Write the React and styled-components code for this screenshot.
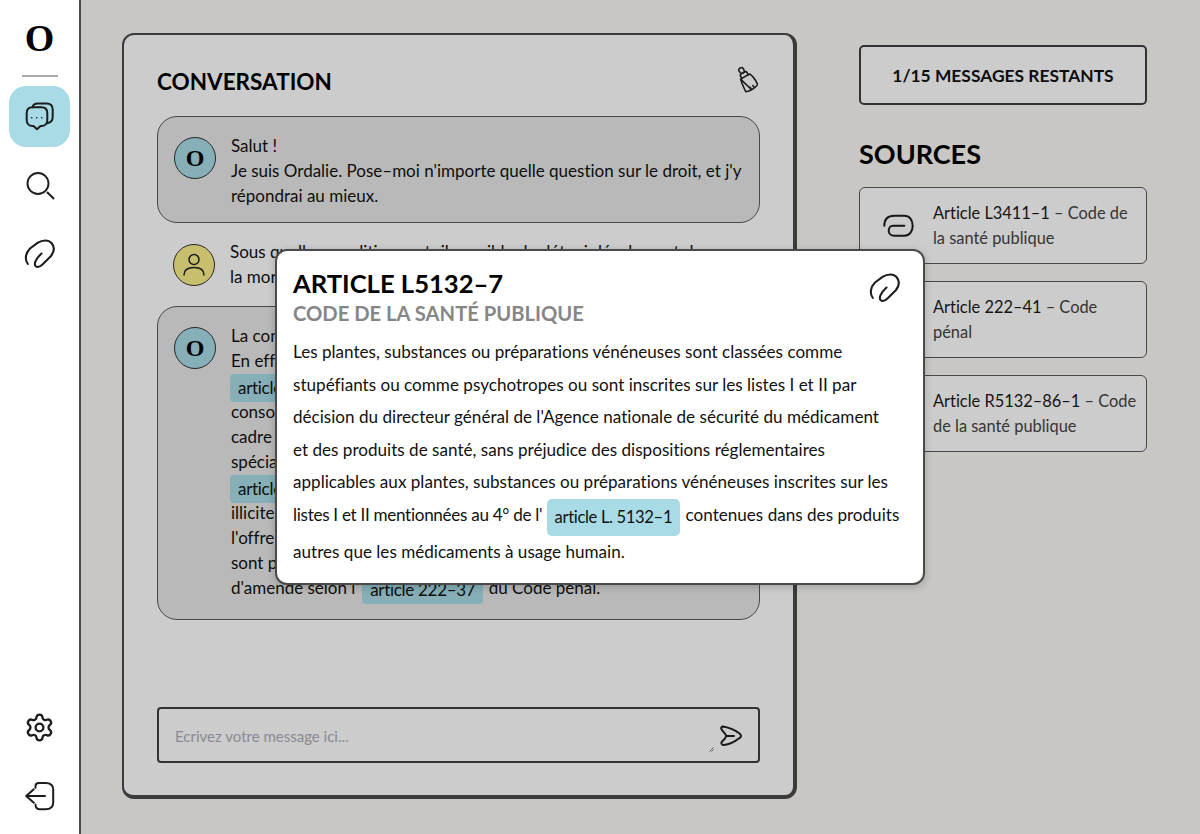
import React from "react";
import styled, { createGlobalStyle } from "styled-components";
import { Settings } from "lucide-react";

const Global = createGlobalStyle`
  html, body { margin: 0; padding: 0; }
  body {
    font-family: "Lato", "Liberation Sans", sans-serif;
    font-variant-ligatures: none;
    color: #111;
    background: #faf9f4;
  }
  * { box-sizing: border-box; }
`;

const Page = styled.div`
  display: flex;
  width: 1200px;
  height: 834px;
  overflow: hidden;
`;

const Sidebar = styled.aside`
  width: 81px;
  flex: none;
  background: #fff;
  border-right: 2px solid #4a4a4a;
  display: flex;
  flex-direction: column;
  align-items: center;
  padding: 18px 0 8px;
`;

const Logo = styled.div`
  font-family: "Liberation Serif", serif;
  font-weight: 700;
  font-size: 38px;
  line-height: 40px;
  color: #000;
`;

const Divider = styled.hr`
  width: 36px;
  height: 2px;
  border: 0;
  margin: 17px 0 9px;
  background: #aaa;
  flex: none;
`;

const NavItem = styled.div`
  width: 61px;
  height: 61px;
  flex: none;
  margin-bottom: ${(p) => p.$gap ?? 8}px;
  display: flex;
  align-items: center;
  justify-content: center;
  border-radius: 17px;
  color: #1d1d1d;
  background: ${(p) => (p.$active ? "#a8dbe6" : "transparent")};
`;

const Spacer = styled.div`
  flex: 1;
`;

const Main = styled.main`
  position: relative;
  flex: 1;
  display: flex;
  align-items: flex-start;
  gap: 62px;
  padding: 33px 53px 35px 41px;
`;

const Dim = styled.div`
  position: absolute;
  inset: 0;
  background: rgba(0, 0, 0, 0.2);
`;

const ChatCard = styled.section`
  width: 675px;
  height: 766px;
  flex: none;
  display: flex;
  flex-direction: column;
  background: #fff;
  border: solid #4a4a4a;
  border-width: 2px 4px 4px 2px;
  border-radius: 12px;
  padding: 0 33px 32px;
`;

const ChatHeader = styled.header`
  height: 81px;
  flex: none;
  display: flex;
  align-items: center;
  justify-content: space-between;
  padding: 11px 0 0;
`;

const ChatTitle = styled.h2`
  margin: 0;
  font-size: 22.5px;
  font-weight: 700;
  color: #000;
`;

const CleanButton = styled.div`
  display: flex;
  margin: -3px 2px 0 0;
  color: #222;
`;

const Messages = styled.div`
  flex: 1;
  display: flex;
  flex-direction: column;
  gap: 10px;
`;

const Message = styled.div`
  display: flex;
  gap: 15px;
  padding: ${(p) => (p.$bot ? `16px 17px ${p.$bottom ?? 14}px 16px` : "5px 17px 6px 15px")};
  border-radius: 20px;
  border: 1px solid ${(p) => (p.$bot ? "#5a5a5a" : "transparent")};
  background: ${(p) => (p.$bot ? "#e8e8e8" : "transparent")};
  font-size: 17px;
  line-height: 25px;
`;

const Avatar = styled.div`
  width: 42px;
  height: 42px;
  flex: none;
  margin-top: ${(p) => p.$top}px;
  border-radius: 50%;
  border: 1px solid #333;
  background: ${(p) => p.$color};
  display: flex;
  align-items: center;
  justify-content: center;
  font-family: "Liberation Serif", serif;
  font-weight: 700;
  font-size: 24px;
  color: #000;
`;

const MessageText = styled.div`
  flex: 1;
  white-space: nowrap;
`;

const Chip = styled.span`
  display: inline-block;
  font-size: 17px;
  letter-spacing: -0.3px;
  line-height: 25px;
  padding: 1px 8px 2px;
  margin: 0 1px -3px -1px;
  border-radius: 4px;
  background: #a8dbe6;
  vertical-align: -2px;
`;

const InputBox = styled.div`
  position: relative;
  height: 56px;
  flex: none;
  display: flex;
  align-items: center;
  border: 2px solid #3f3f3f;
  border-radius: 4px;
  padding: 0 16px 0 0;
`;

const InputField = styled.textarea`
  flex: 1;
  height: 44px;
  padding: 13px 0 0 16px;
  border: 0;
  outline: none;
  background: transparent;
  resize: none;
  font-family: inherit;
  font-size: 15px;
  line-height: 20px;
  &::placeholder { color: #adadba; opacity: 1; }
`;

const ResizeGrip = styled.svg`
  position: absolute;
  right: 44px;
  bottom: 9px;
  color: #555;
`;

const SendButton = styled.div`
  display: flex;
  flex: none;
  margin-top: 1px;
  color: #1f1f1f;
`;

const Side = styled.aside`
  width: 288px;
  flex: none;
  padding-top: 12px;
`;

const Counter = styled.div`
  height: 60px;
  display: flex;
  align-items: center;
  justify-content: center;
  border: 2px solid #3f3f3f;
  border-radius: 5px;
  background: #fff;
  font-size: 17.4px;
  font-weight: 700;
  color: #111;
`;

const SourcesTitle = styled.h2`
  margin: 32px 0 16px;
  font-size: 27px;
  line-height: 34px;
  font-weight: 700;
  color: #000;
`;

const SourceList = styled.div`
  display: flex;
  flex-direction: column;
  gap: 17px;
`;

const SourceCard = styled.div`
  height: 77px;
  display: flex;
  align-items: center;
  gap: 19px;
  padding: 0 8px 0 23px;
  border: 1px solid #5a5a5a;
  border-radius: 6px;
  background: #fff;
  font-size: 16.4px;
  line-height: 25px;
  color: #1a1a1a;
`;

const SourceIcon = styled.div`
  display: flex;
  flex: none;
  color: #1d1d1d;
`;

const SourceText = styled.div`
  margin-top: -2px;
`;

const SourceCode = styled.span`
  color: #444;
`;

const Popup = styled.div`
  position: absolute;
  left: 194px;
  top: 249px;
  width: 650px;
  height: 336px;
  padding: 17px 16px 0 16px;
  background: #fff;
  border: 2px solid #4a4a4a;
  border-radius: 12px;
  box-shadow: 0 2px 8px rgba(0, 0, 0, 0.2);
`;

const PopupHead = styled.div`
  display: flex;
  justify-content: space-between;
  align-items: flex-start;
`;

const PopupTitle = styled.h3`
  margin: 0;
  font-size: 25.6px;
  line-height: 30px;
  font-weight: 700;
  color: #000;
`;

const PopupSub = styled.h4`
  margin: 2px 0 0;
  font-size: 20.2px;
  line-height: 26px;
  font-weight: 700;
  color: #868686;
`;

const PopupClip = styled.div`
  display: flex;
  margin: 5px 6px 0 0;
  color: #1d1d1d;
`;

const PopupBody = styled.p`
  margin: 10px 0 0;
  font-size: 17.1px;
  line-height: 32.5px;
  color: #111;
  white-space: nowrap;
`;

const TightRun = styled.span`
  letter-spacing: -0.3px;
`;

const PopupChip = styled.span`
  display: inline-block;
  font-size: 16.6px;
  letter-spacing: -0.35px;
  line-height: 25px;
  padding: 6px 8px;
  margin-right: 1px;
  border-radius: 5px;
  background: #a8dbe6;
  vertical-align: -2px;
`;

const ClipIcon = ({ size = 32 }) => (
  <svg width={size} height={size} viewBox="0 0 32 32" fill="none" stroke="currentColor" strokeWidth="2.100" strokeLinecap="round" strokeLinejoin="round">
    <path d="M3.800 25C0.500 20.500 1.500 14 6 9.500L13.500 3.800C18.500 0.800 24.500 0.500 27.500 4C31 8 30 13 27 17L19.500 24.500C16.500 27.300 13.500 28.800 11.800 27.300C9.500 25 11.500 20 17.500 14.500" />
  </svg>
);

const FlatClip = () => (
  <svg width="31" height="23" viewBox="0 0 31 23" fill="none" stroke="currentColor" strokeWidth="2" strokeLinecap="round" strokeLinejoin="round">
    <path d="M1.300 11.700C1.300 5 5 1.700 11.300 1.700H21.300C26.500 1.700 29.700 6 29.700 11.700C29.700 17.500 26.500 21.700 21.300 21.700H11.300C8 21.700 5.700 19.500 5.700 16.700C5.700 13.800 7.500 11.700 10 11.700H21.300" />
  </svg>
);

const ChatsIcon = () => (
  <svg width="30" height="30" viewBox="0 0 30 30" fill="none" stroke="currentColor" strokeWidth="2" strokeLinecap="round" strokeLinejoin="round">
    <path d="M7.500 5.300C8 3 10 1.500 12.500 1.500H21.500C25.500 1.500 27.700 3.800 27.700 7.500V15C27.700 18 26 20.500 22.300 21.300" />
    <path d="M7.500 5.300H16.500C20 5.300 22.300 7.500 22.300 11V18C22.300 21.500 20 24 16.500 24H15.500L12 27.300L8.500 24H7.500C4 24 1.700 21.500 1.700 18V11C1.700 7.500 4 5.300 7.500 5.300Z" />
    <path d="M6.700 15.700H6.800M11.700 15.700H11.800M16.700 15.700H16.800" strokeWidth="1.600" />
  </svg>
);

const SearchIcon = () => (
  <svg width="30" height="30" viewBox="0 0 30 30" fill="none" stroke="currentColor" strokeWidth="1.900" strokeLinecap="round">
    <circle cx="13" cy="12.500" r="10.500" />
    <path d="M22.500 21.500L28.500 27.500" />
  </svg>
);

const LogoutIcon = () => (
  <svg width="30" height="30" viewBox="0 0 30 30" fill="none" stroke="currentColor" strokeWidth="2" strokeLinecap="round" strokeLinejoin="round">
    <path d="M10.500 6.700V5C10.500 3 12 2 14 2H20.500C25.500 2 28.200 4.500 28.200 8.500V21.500C28.200 25.500 25.500 28.300 20.500 28.300H14.800C12 28.300 10.500 26.500 10.500 23.500" />
    <path d="M20 15H1.200M8.800 8.300L1.200 15L8.800 21.700" />
  </svg>
);

const BroomIcon = () => (
  <svg width="23" height="28" viewBox="0 0 24 30" fill="none" stroke="currentColor" strokeWidth="1.700" strokeLinecap="round" strokeLinejoin="round">
    <g transform="rotate(-30 12 15)">
      <rect x="10" y="0.500" width="5" height="6" rx="2" />
      <path d="M8.500 11V8.500C8.500 7 9.500 6.500 10.500 6.500H14.500C15.500 6.500 16.500 7 16.500 8.500V11" />
      <path d="M7 11H18C20 14 20.500 19 20 25C18.500 26 16.500 26.500 15 26.500V23.500M15 26.500C13.500 26.800 12 26.800 11.500 26.800V23.500M11.500 26.800C9.500 26.800 7.500 26.500 5 25.500C5.500 20 6 14 7 11Z" />
    </g>
  </svg>
);

const SendIcon = () => (
  <svg width="22" height="22" viewBox="0 0 22 22" fill="none" stroke="currentColor" strokeWidth="2" strokeLinecap="round" strokeLinejoin="round">
    <path d="M3 1.600C8 2.500 15 5 19.500 8.500C21.500 10 21.500 12 19.500 13C15 16.500 9 19.500 4 20C1.500 20.300 0.800 18 2 16.500C3.500 15 5.500 13.500 6.300 11C5.500 8.500 3 6.500 1.600 4.500C0.800 3 1.500 1.500 3 1.600ZM6.300 11H14" />
  </svg>
);

const UserIcon = () => (
  <svg width="28" height="28" viewBox="0 0 28 28" fill="none" stroke="#222" strokeWidth="1.500" strokeLinecap="round">
    <circle cx="14" cy="8.500" r="5" />
    <path d="M4 24C4 19 8 16.500 14 16.500C20 16.500 24 19 24 24" />
  </svg>
);

const sources = [
  { title: "Article L3411–1", code: "Code de la santé publique" },
  { title: "Article 222–41", code: "Code pénal" },
  { title: "Article R5132–86–1", code: "Code de la santé publique" },
];

export default function App() {
  return (
    <Page>
      <Global />
      <Sidebar>
        <Logo>O</Logo>
        <Divider />
        <NavItem $active><ChatsIcon /></NavItem>
        <NavItem><SearchIcon /></NavItem>
        <NavItem><ClipIcon /></NavItem>
        <Spacer />
        <NavItem $gap={7}><Settings size={31} strokeWidth={1.8} /></NavItem>
        <NavItem $gap={0}><LogoutIcon /></NavItem>
      </Sidebar>
      <Main>
        <ChatCard>
          <ChatHeader>
            <ChatTitle>CONVERSATION</ChatTitle>
            <CleanButton><BroomIcon /></CleanButton>
          </ChatHeader>
          <Messages>
            <Message $bot>
              <Avatar $color="#a8dbe6" $top={4}>O</Avatar>
              <MessageText>
                Salut !<br />
                Je suis Ordalie. Pose–moi n'importe quelle question sur le droit, et j'y<br />
                répondrai au mieux.
              </MessageText>
            </Message>
            <Message>
              <Avatar $color="#f9ee8a" $top={5}><UserIcon /></Avatar>
              <MessageText>
                Sous quelles conditions est–il possible de détenir légalement de<br />
                la morphine ?
              </MessageText>
            </Message>
            <Message $bot $bottom={18}>
              <Avatar $color="#a8dbe6" $top={4}>O</Avatar>
              <MessageText>
                La consommation de morphine est strictement encadrée.<br />
                En effet, elle est classée comme stupéfiant au sens de l'<br />
                <Chip>article L5132–7</Chip> du Code de la santé publique. Sa<br />
                consommation n'est donc autorisée que dans le<br />
                cadre d'une prescription médicale établie par un<br />
                spécialiste, conformément aux dispositions de l'<br />
                <Chip>article R5132–86–1</Chip> du même code. Le trafic<br />
                illicite de stupéfiants est sévèrement réprimé, et<br />
                l'offre ou la cession de ces produits à un tiers<br />
                sont passibles de dix ans de prison et de 7 500 000 €<br />
                d'amende selon l' <Chip>article 222–37</Chip> du Code pénal.
              </MessageText>
            </Message>
          </Messages>
          <InputBox>
            <InputField placeholder="Ecrivez votre message ici..." />
            <ResizeGrip width="5" height="5" viewBox="0 0 5 5" fill="none" stroke="currentColor" strokeWidth="0.800">
              <path d="M0.500 4.500L4.500 0.500M2.500 4.500L4.500 2.500" />
            </ResizeGrip>
            <SendButton><SendIcon /></SendButton>
          </InputBox>
        </ChatCard>
        <Side>
          <Counter>1/15 MESSAGES RESTANTS</Counter>
          <SourcesTitle>SOURCES</SourcesTitle>
          <SourceList>
            {sources.map((s) => (
              <SourceCard key={s.title}>
                <SourceIcon><FlatClip /></SourceIcon>
                <SourceText>
                  {s.title} <SourceCode>– {s.code}</SourceCode>
                </SourceText>
              </SourceCard>
            ))}
          </SourceList>
        </Side>
        <Dim />
        <Popup>
          <PopupHead>
            <div>
              <PopupTitle>ARTICLE L5132–7</PopupTitle>
              <PopupSub>CODE DE LA SANTÉ PUBLIQUE</PopupSub>
            </div>
            <PopupClip><ClipIcon /></PopupClip>
          </PopupHead>
          <PopupBody>
            Les plantes, substances ou préparations vénéneuses sont classées comme<br />
            stupéfiants ou comme psychotropes ou sont inscrites sur les listes I et II par<br />
            décision du directeur général de l'Agence nationale de sécurité du médicament<br />
            et des produits de santé, sans préjudice des dispositions réglementaires<br />
            applicables aux plantes, substances ou préparations vénéneuses inscrites sur les<br />
            <TightRun>listes I et II mentionnées au 4° de l'</TightRun> <PopupChip>article L. 5132–1</PopupChip> contenues dans des produits<br />
            autres que les médicaments à usage humain.
          </PopupBody>
        </Popup>
      </Main>
    </Page>
  );
}
